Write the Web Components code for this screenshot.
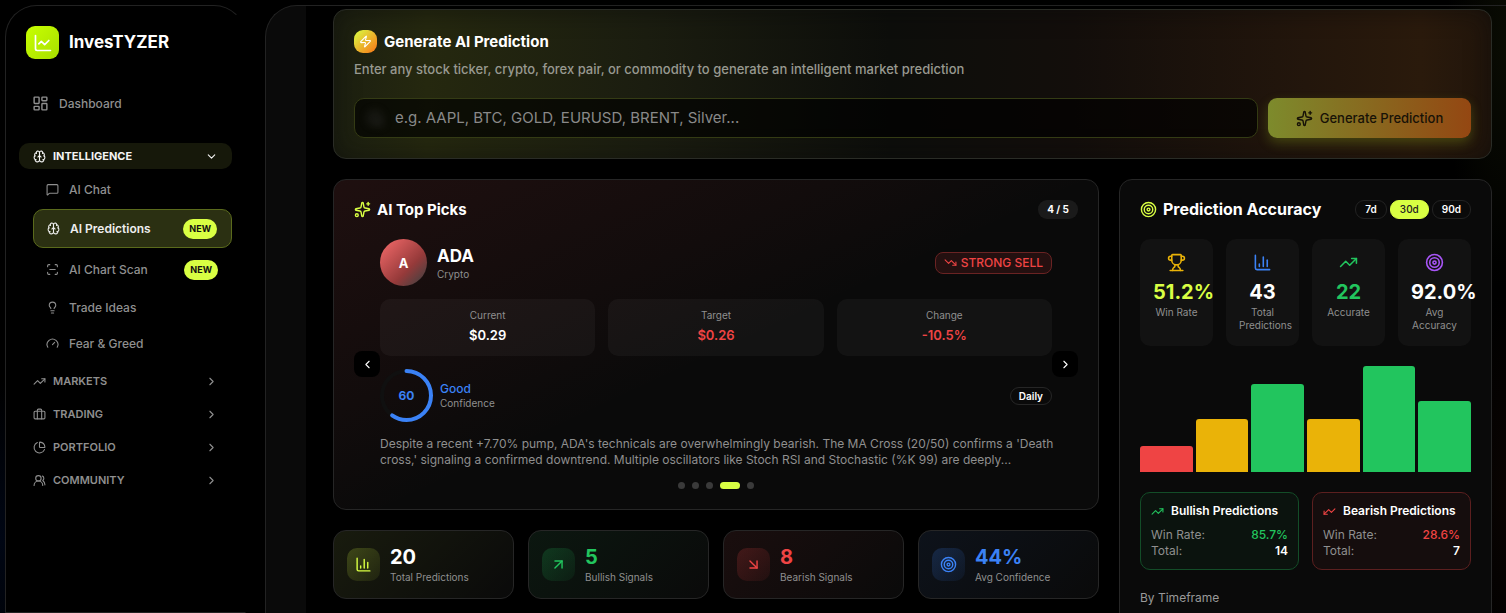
<!DOCTYPE html>
<html lang="en">
<head>
<meta charset="utf-8">
<meta name="viewport" content="width=device-width, initial-scale=1">
<title>InvesTYZER – AI Predictions</title>
<style>
  :root {
    --lime: #d9ff43;
    --green: #22c55e;
    --red: #ef4444;
    --blue: #3b82f6;
    --amber: #eab308;
    --purple: #a855f7;
    --muted: #8f8f8f;
    --line: #262626;
    --card: #0a0a0a;
  }
  body {
    margin: 0;
    background:
      radial-gradient(ellipse 60px 160px at 0 88%, #000614, transparent),
      radial-gradient(ellipse 60px 240px at 100% 8%, #0a0c03, transparent),
      radial-gradient(ellipse 40px 200px at 100% 80%, #0a0402, transparent),
      #000;
    color: #fff;
    font: 12px/16px Inter, "Liberation Sans", sans-serif;
    overflow: hidden;
  }
</style>
</head>
<body>
<app-shell>
  <app-sidebar slot="side"></app-sidebar>
  <prediction-form></prediction-form>
  <dashboard-grid>
    <top-picks></top-picks>
    <stat-card icon="bars" value="20" label="Total Predictions" style="--tone:#d9ff43;--number:#fff"></stat-card>
    <stat-card icon="upright" value="5" label="Bullish Signals" style="--tone:#22c55e"></stat-card>
    <stat-card icon="downright" value="8" label="Bearish Signals" style="--tone:#ef4444"></stat-card>
    <stat-card icon="target" value="44%" label="Avg Confidence" style="--tone:#3b82f6"></stat-card>
    <accuracy-panel slot="aside"></accuracy-panel>
  </dashboard-grid>
</app-shell>

<script>
const ICONS = {
  line: '<path d="M3 3v16a2 2 0 0 0 2 2h16"/><path d="m19 9-5 5-4-4-3 3"/>',
  dashboard: '<rect width="7" height="9" x="3" y="3" rx="1"/><rect width="7" height="5" x="14" y="3" rx="1"/><rect width="7" height="9" x="14" y="12" rx="1"/><rect width="7" height="5" x="3" y="16" rx="1"/>',
  brain: '<path d="M12 18V5"/><path d="M15 13a4.17 4.17 0 0 1-3-4 4.17 4.17 0 0 1-3 4"/><path d="M17.598 6.5A3 3 0 1 0 12 5a3 3 0 1 0-5.598 1.5"/><path d="M17.997 5.125a4 4 0 0 1 2.526 5.77"/><path d="M18 18a4 4 0 0 0 2-7.464"/><path d="M19.967 17.483A4 4 0 1 1 12 18a4 4 0 1 1-7.967-.517"/><path d="M6 18a4 4 0 0 1-2-7.464"/><path d="M6.003 5.125a4 4 0 0 0-2.526 5.77"/>',
  chat: '<path d="M22 17a2 2 0 0 1-2 2H6.828a2 2 0 0 0-1.414.586l-2.202 2.202A.71.71 0 0 1 2 21.286V5a2 2 0 0 1 2-2h16a2 2 0 0 1 2 2z"/>',
  scan: '<path d="M3 7V5a2 2 0 0 1 2-2h2"/><path d="M17 3h2a2 2 0 0 1 2 2v2"/><path d="M21 17v2a2 2 0 0 1-2 2h-2"/><path d="M7 21H5a2 2 0 0 1-2-2v-2"/><path d="M7 12h10"/>',
  bulb: '<path d="M15 14c.2-1 .7-1.7 1.5-2.5 1-.9 1.5-2.2 1.5-3.5A6 6 0 0 0 6 8c0 1 .2 2.2 1.5 3.5.7.7 1.3 1.5 1.5 2.5"/><path d="M9 18h6"/><path d="M10 22h4"/>',
  gauge: '<path d="m12 14 4-4"/><path d="M3.34 19a10 10 0 1 1 17.32 0"/>',
  up: '<path d="M16 7h6v6"/><path d="m22 7-8.5 8.5-5-5L2 17"/>',
  down: '<path d="M16 17h6v-6"/><path d="m22 17-8.5-8.5-5 5L2 7"/>',
  upflip: '<g transform="rotate(180 12 12)"><path d="M16 7h6v6"/><path d="m22 7-8.5 8.5-5-5L2 17"/></g>',
  briefcase: '<path d="M16 20V4a2 2 0 0 0-2-2h-4a2 2 0 0 0-2 2v16"/><rect width="20" height="14" x="2" y="6" rx="2"/>',
  pie: '<path d="M21 12c.552 0 1.005-.449.95-.998a10 10 0 0 0-8.953-8.951c-.55-.055-.998.398-.998.95v8a1 1 0 0 0 1 1z"/><path d="M21.21 15.89A10 10 0 1 1 8 2.83"/>',
  users: '<path d="M18 21a8 8 0 0 0-16 0"/><circle cx="10" cy="8" r="5"/><path d="M22 20c0-3.37-2-6.5-4-8a5 5 0 0 0-.45-8.3"/>',
  zap: '<path d="M4 14a1 1 0 0 1-.78-1.63l9.9-10.2a.5.5 0 0 1 .86.46l-1.92 6.02A1 1 0 0 0 13 10h7a1 1 0 0 1 .78 1.63l-9.9 10.2a.5.5 0 0 1-.86-.46l1.92-6.02A1 1 0 0 0 11 14z"/>',
  sparkles: '<path d="M11.017 2.814a1 1 0 0 1 1.966 0l1.051 5.558a2 2 0 0 0 1.594 1.594l5.558 1.051a1 1 0 0 1 0 1.966l-5.558 1.051a2 2 0 0 0-1.594 1.594l-1.051 5.558a1 1 0 0 1-1.966 0l-1.051-5.558a2 2 0 0 0-1.594-1.594l-5.558-1.051a1 1 0 0 1 0-1.966l5.558-1.051a2 2 0 0 0 1.594-1.594z"/><path d="M20 2v4"/><path d="M22 4h-4"/><circle cx="4" cy="20" r="2"/>',
  target: '<circle cx="12" cy="12" r="10"/><circle cx="12" cy="12" r="6"/><circle cx="12" cy="12" r="2"/>',
  bars: '<path d="M3 3v16a2 2 0 0 0 2 2h16"/><path d="M18 17V9"/><path d="M13 17V5"/><path d="M8 17v-3"/>',
  trophy: '<path d="M10 14.66v1.626a2 2 0 0 1-.976 1.696A5 5 0 0 0 7 21.978"/><path d="M14 14.66v1.626a2 2 0 0 0 .976 1.696A5 5 0 0 1 17 21.978"/><path d="M18 9h1.5a1 1 0 0 0 0-5H18"/><path d="M4 22h16"/><path d="M6 9a6 6 0 0 0 12 0V3a1 1 0 0 0-1-1H7a1 1 0 0 0-1 1z"/><path d="M6 9H4.5a1 1 0 0 1 0-5H6"/>',
  upright: '<path d="M7 7h10v10"/><path d="M7 17 17 7"/>',
  downright: '<path d="m7 7 10 10"/><path d="M17 7v10H7"/>',
  search: '<circle cx="11" cy="11" r="8"/><path d="m21 21-4.3-4.3"/>',
  right: '<path d="m9 18 6-6-6-6"/>',
  left: '<path d="m15 18-6-6 6-6"/>',
  chevdown: '<path d="m6 9 6 6 6-6"/>'
};

function define(name, render) {
  customElements.define(name, class extends HTMLElement {
    connectedCallback() {
      if (this.shadowRoot) return;
      const t = document.createElement('template');
      t.innerHTML = '<style>*{box-sizing:border-box}button{font:inherit;color:inherit;margin:0;padding:0;border:0;background:none;cursor:pointer}h1,h2,h3,p,dl,dd,ul,figure{margin:0;padding:0}</style>' + render(this);
      this.attachShadow({ mode: 'open' }).append(t.content.cloneNode(true));
    }
  });
}
const at = (el, n) => el.getAttribute(n) || '';

define('ui-icon', el => `
<style>:host{display:block;flex:none;width:${at(el, 'size')}px;height:${at(el, 'size')}px}svg{display:block;width:100%;height:100%}</style>
<svg viewBox="0 0 24 24" fill="none" stroke="currentColor" stroke-width="2" stroke-linecap="round" stroke-linejoin="round" aria-hidden="true">${ICONS[at(el, 'name')]}</svg>`);

define('app-shell', () => `
<style>
:host{display:flex;gap:19px;height:100vh;box-sizing:border-box;padding:5px 0 0 5px}
.main{flex:1;min-width:0;border:1px solid #222;border-width:1px 0 0 1px;border-radius:32px 0 0 0;overflow:hidden;
  background:linear-gradient(to right,#0a0a0a 40px,transparent 40px)}
main{display:flex;flex-direction:column;gap:20px;padding:3px 14px 0 67px}
</style>
<slot name="side"></slot>
<div class="main"><main><slot></slot></main></div>`);

define('nav-item', el => `
<style>
:host{display:block}
a{display:flex;align-items:center;height:33px;padding:0 14px 0 13px;color:var(--muted);font-weight:500;text-decoration:none}
a.badge{height:37px}
a.on{height:39px;color:#eee;font-weight:600;background:#2b3012;border:1px solid #5a6a1c;border-radius:10px}
.t{flex:1;margin-left:10px}
.new{background:var(--lime);color:#111;font-size:9px;font-weight:700;line-height:20px;padding:0 6px;border-radius:10px}
</style>
<a href="#" class="${el.hasAttribute('badge') ? 'badge' : ''} ${el.hasAttribute('active') ? 'on' : ''}">
<ui-icon name="${at(el, 'icon')}" size="${at(el, 'size') || 13}"></ui-icon><span class="t"><slot></slot></span>
${el.hasAttribute('badge') ? '<span class="new">NEW</span>' : ''}</a>`);

define('nav-group', el => `
<style>
:host{display:block}
button{display:flex;align-items:center;gap:7px;width:100%;height:26px;padding:0 14px;border-radius:10px;color:var(--muted);font-size:11px;font-weight:600;text-align:left}
button.on{background:#16180a;color:#f4f4f4;font-weight:700}
.t{flex:1}
.sub{display:flex;flex-direction:column;gap:3px;padding:4px 0 1px 14px}
</style>
<button type="button" class="${el.hasAttribute('open') ? 'on' : ''}" aria-expanded="${el.hasAttribute('open')}">
<ui-icon name="${at(el, 'icon')}" size="13"></ui-icon><span class="t">${at(el, 'label')}</span><ui-icon name="${el.hasAttribute('open') ? 'chevdown' : 'right'}" size="13"></ui-icon></button>
${el.hasAttribute('open') ? '<div class="sub"><slot></slot></div>' : ''}`);

define('app-sidebar', () => `
<style>
:host{display:block;flex:none;width:241px;box-sizing:border-box;background:#000;border:1px solid #222;border-right-color:transparent;border-radius:32px 32px 0 0;padding:20px 13px 0}
.brand{display:flex;align-items:center;gap:10px;padding-left:7px;font-size:17px;line-height:33px;font-weight:700}
.logo{display:grid;place-items:center;width:33px;height:33px;border-radius:9px;background:linear-gradient(135deg,#c8ff00,#a8e000)}
nav{display:flex;flex-direction:column;gap:7px}
.home{margin:28px 0 16px}
</style>
<div class="brand"><span class="logo"><ui-icon name="line" size="20"></ui-icon></span>InvesTYZER</div>
<nav aria-label="Main">
<nav-item class="home" icon="dashboard" size="17">Dashboard</nav-item>
<nav-group icon="brain" label="INTELLIGENCE" open>
  <nav-item icon="chat">AI Chat</nav-item>
  <nav-item icon="brain" badge active>AI Predictions</nav-item>
  <nav-item icon="scan" badge>AI Chart Scan</nav-item>
  <nav-item icon="bulb">Trade Ideas</nav-item>
  <nav-item icon="gauge">Fear &amp; Greed</nav-item>
</nav-group>
<nav-group icon="up" label="MARKETS"></nav-group>
<nav-group icon="briefcase" label="TRADING"></nav-group>
<nav-group icon="pie" label="PORTFOLIO"></nav-group>
<nav-group icon="users" label="COMMUNITY"></nav-group>
</nav>`);

define('prediction-form', () => `
<style>
:host{display:block;border:1px solid #2a2c26;border-radius:13px;padding:20px;
  background:linear-gradient(to right,#1c1f10,#25280f 8%,#1b1d10 27%,#0d0e0b 48%,#130e0b 64%,#23160c 84%,#2a1a0c 94%,#21150b);
  box-shadow:inset 0 0 24px rgba(10,10,10,.5)}
h1{display:flex;align-items:center;gap:7px;font-size:15px;line-height:23px;font-weight:700}
.badge{display:grid;place-items:center;width:23px;height:23px;border-radius:9px;background:linear-gradient(135deg,#d9ff43,#f97316)}
p{margin-top:6px;font-size:13px;line-height:20px;color:#989990;font-weight:500}
form{display:flex;gap:10px;margin-top:19px}
.field{flex:1;display:flex;align-items:center;gap:11px;height:40px;padding:0 12px;border:1px solid #343b14;border-radius:10px;background:rgba(0,0,0,.65)}
.field ui-icon{color:#444;filter:blur(4px)}
input{flex:1;min-width:0;border:0;outline:0;background:none;color:#fff;font:15px/20px Inter,"Liberation Sans",sans-serif;padding:0}
input::placeholder{color:#898989;opacity:1}
button{display:flex;align-items:center;justify-content:center;gap:7px;width:203px;height:40px;border-radius:9px;background:linear-gradient(to right,#7d8b2c,#944712);color:#171207;font-size:13px;font-weight:500;box-shadow:0 5px 12px rgba(150,180,30,.28)}
</style>
<h1><span class="badge"><ui-icon name="zap" size="13"></ui-icon></span>Generate AI Prediction</h1>
<p>Enter any stock ticker, crypto, forex pair, or commodity to generate an intelligent market prediction</p>
<form onsubmit="return false">
<div class="field"><ui-icon name="search" size="17"></ui-icon><input type="text" aria-label="Ticker" placeholder="e.g. AAPL, BTC, GOLD, EURUSD, BRENT, Silver..."></div>
<button type="submit"><ui-icon name="sparkles" size="17"></ui-icon>Generate Prediction</button>
</form>`);

define('dashboard-grid', () => `
<style>
:host{display:grid;grid-template-columns:766fr 373fr;gap:20px;align-items:start}
.left{display:grid;grid-template-columns:repeat(4,minmax(0,1fr));gap:20px 14px}
::slotted(top-picks){grid-column:1/-1}
</style>
<div class="left"><slot></slot></div><slot name="aside"></slot>`);

define('price-box', el => `
<style>
:host{display:block;text-align:center;padding:8px 0 11px;border-radius:10px;background:rgba(255,255,255,.04);color:var(--muted);font-size:10px;line-height:16px}
b{display:block;margin-top:2px;font-size:13px;line-height:20px;font-weight:600;color:var(--tone,#fff)}
</style>${at(el, 'label')}<b>${at(el, 'value')}</b>`);

define('top-picks', () => `
<style>
:host{display:block;border:1px solid var(--line);border-radius:13px;padding:20px;
  background:linear-gradient(155deg,rgba(239,68,68,.09),rgba(239,68,68,.03) 36%,transparent 52%) var(--card)}
header,.asset,.conf{display:flex;align-items:center}
h2{display:flex;flex:1;align-items:center;gap:6px;font-size:15px;line-height:19px;font-weight:700}
h2 ui-icon{color:var(--lime)}
.count{padding:0 9px;border-radius:9px;background:#1a1a1a;font-size:10px;line-height:19px;font-weight:700}
.slider{position:relative;margin-top:20px;padding:0 26px}
.nav{position:absolute;top:50%;margin-top:-13px;display:grid;place-items:center;width:26px;height:26px;border-radius:8px;background:#000}
.prev{left:0}.next{right:0}
.avatar{display:grid;place-items:center;width:47px;height:47px;border-radius:50%;background:linear-gradient(135deg,#e86464 10%,#963a3a 62%,#4c4040 90%);font-size:13px;font-weight:700}
.name{flex:1;margin-left:10px;color:var(--muted);font-size:10px;line-height:14px}
h3{margin:0;font-size:17px;line-height:22px;color:#fff}
.sell{display:flex;align-items:center;gap:4px;height:22px;padding:0 8px;border:1px solid #6a2323;border-radius:8px;background:#241010;color:var(--red);font-weight:500}
.prices{display:grid;grid-template-columns:repeat(3,1fr);gap:13px;margin:13px 0}
.ring{display:grid;width:53px;height:53px;place-items:center;font-size:12px;font-weight:700;color:var(--blue)}
.ring>*{grid-area:1/1}
.ring svg{width:53px;height:53px}
.good{flex:1;margin-left:7px;color:var(--muted);font-size:10px;line-height:13px}
.good b{display:block;color:var(--blue);font-size:12px;line-height:16px;font-weight:500}
.term{height:18px;padding:0 8px;border:1px solid var(--line);border-radius:9px;font-size:10px;line-height:16px;font-weight:600}
p{margin:14px -8px 14px 0;color:var(--muted);display:-webkit-box;-webkit-box-orient:vertical;-webkit-line-clamp:2;overflow:hidden}
.dots{display:flex;justify-content:center;gap:7px}
.dots button{width:7px;height:7px;border-radius:4px;background:#3a3a3a}
.dots .on{width:20px;background:var(--lime)}
</style>
<header><h2><ui-icon name="sparkles" size="17"></ui-icon>AI Top Picks</h2><span class="count">4 / 5</span></header>
<div class="slider">
<div class="asset"><span class="avatar">A</span><div class="name"><h3>ADA</h3>Crypto</div><span class="sell"><ui-icon name="down" size="13"></ui-icon>STRONG SELL</span></div>
<div class="prices"><price-box label="Current" value="$0.29"></price-box><price-box label="Target" value="$0.26" style="--tone:#ef4444"></price-box><price-box label="Change" value="-10.5%" style="--tone:#ef4444"></price-box></div>
<div class="conf"><div class="ring"><svg viewBox="0 0 53 53" fill="none" stroke-width="4" stroke-linecap="round" aria-hidden="true"><circle cx="26.5" cy="26.5" r="24.5" stroke="#101010"/><circle cx="26.5" cy="26.5" r="24.5" stroke="#3b82f6" pathLength="100" stroke-dasharray="60 100" transform="rotate(-90 26.5 26.5)"/></svg><span>60</span></div>
<div class="good"><b>Good</b>Confidence</div><span class="term">Daily</span></div>
<p>Despite a recent +7.70% pump, ADA's technicals are overwhelmingly bearish. The MA Cross (20/50) confirms a 'Death cross,' signaling a confirmed downtrend. Multiple oscillators like Stoch RSI and Stochastic (%K 99) are deeply...</p>
<div class="dots"><button type="button" aria-label="Pick 1"></button><button type="button" aria-label="Pick 2"></button><button type="button" aria-label="Pick 3"></button><button type="button" class="on" aria-label="Pick 4"></button><button type="button" aria-label="Pick 5"></button></div>
<button type="button" class="nav prev" aria-label="Previous"><ui-icon name="left" size="13"></ui-icon></button>
<button type="button" class="nav next" aria-label="Next"><ui-icon name="right" size="13"></ui-icon></button>
</div>`);

define('stat-card', el => `
<style>
:host{display:flex;align-items:center;gap:10px;box-sizing:border-box;border:1px solid var(--line);border-radius:13px;padding:13px;
  background:linear-gradient(135deg,color-mix(in srgb,var(--tone) 7%,transparent),transparent) var(--card)}
.i{display:grid;place-items:center;flex:none;width:33px;height:33px;border-radius:10px;color:var(--tone);
  background:linear-gradient(135deg,color-mix(in srgb,var(--tone) 20%,transparent),color-mix(in srgb,var(--tone) 6%,transparent))}
div{font-size:10px;line-height:15px;color:var(--muted)}
b{display:block;font-size:20px;line-height:26px;font-weight:700;color:var(--number,var(--tone))}
</style>
<span class="i"><ui-icon name="${at(el, 'icon')}" size="17"></ui-icon></span><div><b>${at(el, 'value')}</b>${at(el, 'label')}</div>`);

define('metric-box', el => `
<style>
:host{display:block;box-sizing:border-box;min-width:0;height:107px;padding:14px 13px 0;border-radius:10px;background:#121212;text-align:center;color:var(--muted);font-size:10px;line-height:13px}
ui-icon{margin:0 auto;color:var(--tone)}
b{display:block;margin:7px 0 1px;font-size:20px;line-height:26px;font-weight:700;color:var(--number,#fff)}
</style><ui-icon name="${at(el, 'icon')}" size="19"></ui-icon><b>${at(el, 'value')}</b>${at(el, 'label')}`);

define('side-box', el => `
<style>
:host{display:block;border:1px solid color-mix(in srgb,var(--tone) 36%,#0a0a0a);border-radius:10px;padding:10px;background:color-mix(in srgb,var(--tone) 5%,#0a0a0a)}
h3{display:flex;align-items:center;gap:7px;margin-bottom:8px;font-size:12px;line-height:16px;font-weight:600;white-space:nowrap}
h3 ui-icon{color:var(--tone)}
dl{display:grid;grid-template-columns:1fr auto;color:var(--muted)}
dd{color:#fff;font-weight:600;text-align:right}
dd.r{color:var(--tone);font-weight:500}
</style>
<h3><ui-icon name="${at(el, 'icon')}" size="13"></ui-icon>${at(el, 'label')}</h3>
<dl><dt>Win Rate:</dt><dd class="r">${at(el, 'rate')}</dd><dt>Total:</dt><dd>${at(el, 'total')}</dd></dl>`);

define('accuracy-panel', () => `
<style>
:host{display:block;min-width:0;min-height:460px;box-sizing:border-box;border:1px solid var(--line);border-radius:13px;padding:20px;background:var(--card)}
header{display:flex;align-items:center;gap:3px}
h2{display:flex;flex:1;align-items:center;gap:6px;font-size:16px;line-height:19px;font-weight:700;white-space:nowrap}
h2 ui-icon{color:var(--lime)}
button{height:19px;padding:0 9px;border:1px solid #222;border-radius:9px;font-size:10px;line-height:17px;font-weight:600}
button.on{background:var(--lime);border-color:var(--lime);color:#222;font-weight:500}
.m{display:grid;grid-template-columns:repeat(4,minmax(0,1fr));gap:13px;margin:20px 0}
.chart{display:grid;grid-template-columns:repeat(6,1fr);gap:3px;align-items:end;height:106px}
.chart i{height:var(--h);background:var(--c);border-radius:3px 3px 0 0}
.s{display:grid;grid-template-columns:1fr 1fr;gap:13px;margin:20px 0}
p{color:#999}
</style>
<header><h2><ui-icon name="target" size="17"></ui-icon>Prediction Accuracy</h2><button type="button">7d</button><button type="button" class="on">30d</button><button type="button">90d</button></header>
<div class="m">
<metric-box icon="trophy" value="51.2%" label="Win Rate" style="--tone:#eab308;--number:#d9ff43"></metric-box>
<metric-box icon="bars" value="43" label="Total Predictions" style="--tone:#3b82f6"></metric-box>
<metric-box icon="up" value="22" label="Accurate" style="--tone:#22c55e;--number:#22c55e"></metric-box>
<metric-box icon="target" value="92.0%" label="Avg Accuracy" style="--tone:#a855f7"></metric-box>
</div>
<div class="chart" role="img" aria-label="Accuracy by period">
<i style="--h:25%;--c:var(--red)"></i><i style="--h:50%;--c:var(--amber)"></i><i style="--h:83%;--c:var(--green)"></i><i style="--h:50%;--c:var(--amber)"></i><i style="--h:100%;--c:var(--green)"></i><i style="--h:67%;--c:var(--green)"></i>
</div>
<div class="s">
<side-box icon="up" label="Bullish Predictions" rate="85.7%" total="14" style="--tone:#22c55e"></side-box>
<side-box icon="upflip" label="Bearish Predictions" rate="28.6%" total="7" style="--tone:#ef4444"></side-box>
</div>
<p>By Timeframe</p>`);
</script>
</body>
</html>
